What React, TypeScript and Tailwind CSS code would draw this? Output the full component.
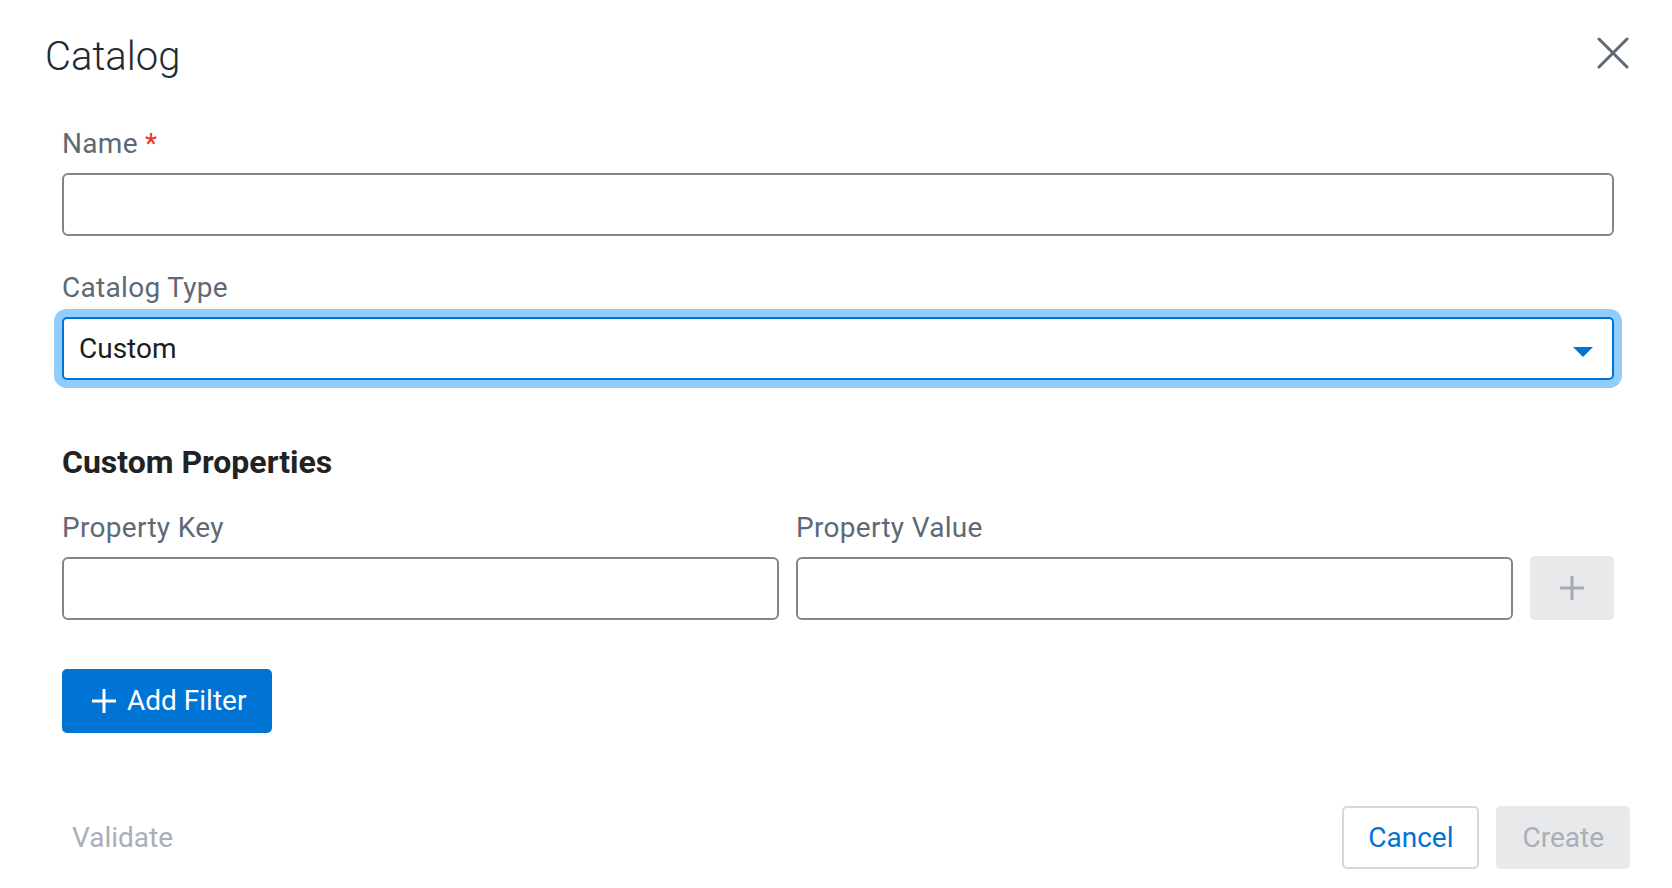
import React from "react";

const Label: React.FC<{ children: React.ReactNode }> = ({ children }) => (
    <div className="text-[28px] leading-[40px] tracking-[0.3px] text-[#5d6975] mb-[9px]">{children}</div>
);

const TextInput: React.FC = () => (
    <div className="h-[63px] w-full border-2 border-[#7e878f] rounded-[6px] bg-white" />
);

const App: React.FC = () => {
    return (
        <div className="w-[1672px] h-[888px] bg-white font-['Roboto','Liberation_Sans',sans-serif] overflow-hidden">
            {/* header */}
            <div className="flex items-start justify-between pl-[45px] pr-[43px] pt-[33px]">
                <h1 className="text-[40px] leading-[48px] font-light text-[#1f2933]">Catalog</h1>
                <button className="mt-[4px] text-[#5d6975]">
                    <svg width="32" height="32" viewBox="0 0 32 32" fill="none" stroke="currentColor" strokeWidth="3" strokeLinecap="round">
                        <line x1="2" y1="2" x2="30" y2="30" />
                        <line x1="30" y1="2" x2="2" y2="30" />
                    </svg>
                </button>
            </div>

            {/* body */}
            <div className="pl-[62px] pr-[58px]">
                <div className="mt-[43px]">
                    <Label>
                        Name <span className="text-[#e8352b]">*</span>
                    </Label>
                    <TextInput />
                </div>

                <div className="mt-[32px]">
                    <Label>Catalog Type</Label>
                    <div className="h-[63px] w-full flex items-center justify-between border-2 border-[#0074d4] rounded-[5px] ring-8 ring-[#90cdfd] pl-[15px] pr-[19px] bg-white">
                        <span className="text-[28px] text-[#1d1d1d]">Custom</span>
                        <svg width="20" height="10" viewBox="0 0 20 10" className="translate-y-[3px]">
                            <path d="M0 0 L20 0 L10 10 Z" fill="#0074d4" />
                        </svg>
                    </div>
                </div>

                <h2 className="mt-[62px] text-[32px] leading-[40px] font-bold text-[#222222]">Custom Properties</h2>

                <div className="mt-[26px] flex items-end gap-[17px]">
                    <div className="flex-1">
                        <Label>Property Key</Label>
                        <TextInput />
                    </div>
                    <div className="flex-1">
                        <Label>Property Value</Label>
                        <TextInput />
                    </div>
                    <button className="w-[84px] h-[64px] rounded-[5px] bg-[#e8e9eb] flex items-center justify-center text-[#a5abb1]">
                        <svg width="24" height="24" viewBox="0 0 24 24" fill="none" stroke="currentColor" strokeWidth="3">
                            <line x1="12" y1="0" x2="12" y2="24" />
                            <line x1="0" y1="12" x2="24" y2="12" />
                        </svg>
                    </button>
                </div>

                <button className="mt-[49px] inline-flex items-center gap-[11px] h-[64px] pl-[30px] pr-[26px] rounded-[5px] bg-[#0074d4] text-white text-[28px]">
                    <svg width="24" height="24" viewBox="0 0 24 24" fill="none" stroke="currentColor" strokeWidth="3">
                        <line x1="12" y1="0" x2="12" y2="24" />
                        <line x1="0" y1="12" x2="24" y2="12" />
                    </svg>
                    Add Filter
                </button>
            </div>

            {/* footer */}
            <div className="mt-[73px] flex items-center justify-between pl-[46px] pr-[42px]">
                <button className="h-[63px] px-[26px] text-[28px] text-[#a9afb5]">Validate</button>
                <div className="flex items-center gap-[17px]">
                    <button className="h-[63px] px-6 border-2 border-[#d5d8dc] rounded-[5px] text-[28px] text-[#0074d4] bg-white">
                        Cancel
                    </button>
                    <button className="h-[63px] px-6 border-2 border-transparent rounded-[5px] text-[28px] text-[#a9afb5] bg-[#e8e9eb]">
                        Create
                    </button>
                </div>
            </div>
        </div>
    );
};

export default App;
